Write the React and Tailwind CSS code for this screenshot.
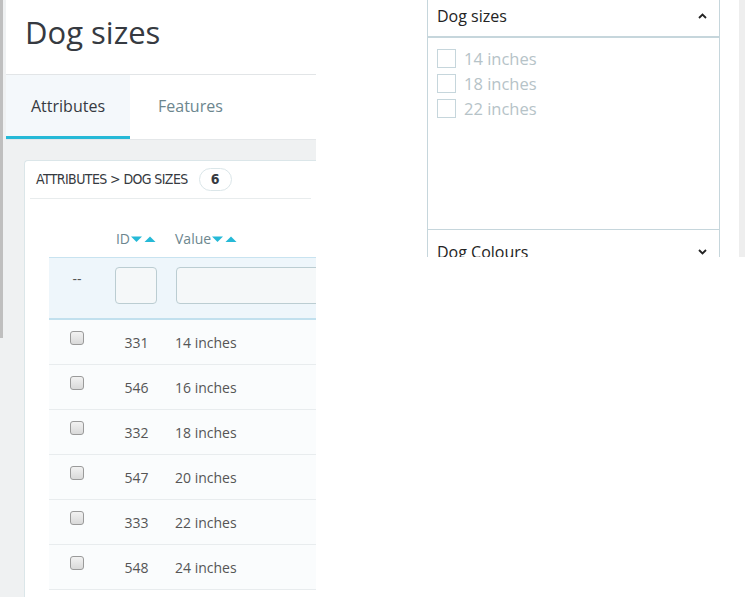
import React from "react";

const OPEN = { fontFamily: '"Open Sans", "Noto Sans", sans-serif' };
const COND = { fontFamily: '"DejaVu Sans Condensed", "Liberation Sans", sans-serif' };

function SortArrows() {
  return (
    <svg width="25" height="8" viewBox="0 0 25 8" className="ml-[1px] shrink-0">
      <path d="M0 1.5 L11 1.5 L5.5 7 Z" fill="#25b9d7" />
      <path d="M13.5 7 L24.5 7 L19 1.5 Z" fill="#25b9d7" />
    </svg>
  );
}

function Check() {
  return (
    <span className="inline-block w-[14px] h-[14px] rounded-[3px] border border-[#9a9a9a] bg-gradient-to-b from-[#f2f2f2] to-[#d9d9d9]" />
  );
}

const rows = [
  ["331", "14 inches"],
  ["546", "16 inches"],
  ["332", "18 inches"],
  ["547", "20 inches"],
  ["333", "22 inches"],
  ["548", "24 inches"],
];

function LeftPanel() {
  return (
    <div className="w-[316px] h-[597px] shrink-0 flex bg-[#eff1f2] overflow-hidden" style={OPEN}>
      <div className="w-[3px] shrink-0">
        <div className="h-[338px] bg-[#bfbfbf]" />
      </div>
      <div className="flex-1 min-w-0 pl-[3px] flex flex-col">
        <div className="h-[75px] bg-white border-b border-[#e2e5e7] flex items-center pl-[19px] shrink-0">
          <span className="text-[31px] text-[#363a41] leading-none -mt-[10px]">Dog sizes</span>
        </div>
        <div className="h-[65px] bg-white flex shrink-0 border-b border-[#e4e7e9]">
          <div className="w-[124px] bg-[#f4f8fb] border-b-[3px] border-[#25b9d7] flex items-center justify-center text-[16px] text-[#363a41] pt-[1px]">
            Attributes
          </div>
          <div className="flex items-center pl-[28px] text-[16px] text-[#6c868e] pb-[3px] pt-[1px]">Features</div>
        </div>
        <div className="pt-[20px] pl-[18px]">
          <div className="bg-white border border-[#dbe6e9] border-r-0 rounded-tl-[4px] h-[460px] overflow-hidden">
            <div className="px-[5px]">
              <div className="h-[38px] border-b border-[#e8eced] flex items-center pl-[6px] gap-[11px]">
                <span className="text-[14px] text-[#363a41] tracking-[-0.6px] uppercase" style={COND}>
                  Attributes &gt; Dog sizes
                </span>
                <span className="h-[23px] w-[33px] rounded-full border border-[#dbe6e9] flex items-center justify-center text-[14px] font-bold text-[#363a41]" style={COND}>
                  6
                </span>
              </div>
            </div>
            <div className="pl-[24px] pt-[21px] w-[420px]">
              <div className="flex h-[37px] items-center text-[14px] text-[#6c868e]">
                <div className="w-[56px] shrink-0" />
                <div className="w-[62px] shrink-0 flex justify-center items-center">
                  ID<SortArrows />
                </div>
                <div className="flex items-center pl-[8px]">
                  Value<SortArrows />
                </div>
              </div>
              <div className="flex h-[63px] bg-[#eef6fb] border-t border-[#c8e3f0] border-b-2 border-b-[#c1e0ee] pt-[9px]">
                <div className="w-[56px] shrink-0 flex justify-center text-[14px] text-[#555] leading-[20px] pt-[2px]">--</div>
                <div className="w-[62px] shrink-0 flex justify-center">
                  <div className="w-[42px] h-[37px] rounded-[4px] border border-[#bbcdd2] bg-[#f5f8f9]" />
                </div>
                <div className="pl-[9px] shrink-0">
                  <div className="w-[220px] h-[37px] rounded-[4px] border border-[#bbcdd2] bg-[#f5f8f9]" />
                </div>
              </div>
              {rows.map(([id, v]) => (
                <div key={id} className="flex h-[45px] bg-[#fafcfd] border-b border-[#e8ecee] text-[14px] text-[#555]">
                  <div className="w-[56px] shrink-0 flex justify-center pt-[11px]">
                    <Check />
                  </div>
                  <div className="w-[62px] shrink-0 flex justify-center items-center pl-[1px]">{id}</div>
                  <div className="flex items-center pl-[8px]">{v}</div>
                </div>
              ))}
            </div>
          </div>
        </div>
      </div>
    </div>
  );
}

function Chevron({ up }) {
  return (
    <svg width="9" height="6" viewBox="0 0 9 6">
      <path
        d={up ? "M1 5 L4.5 1.5 L8 5" : "M1 1 L4.5 4.5 L8 1"}
        fill="none"
        stroke="#232323"
        strokeWidth="1.8"
      />
    </svg>
  );
}

function RightPanel() {
  const items = ["14 inches", "18 inches", "22 inches"];
  return (
    <div className="w-[293px] h-[257px] shrink-0 border-x border-[#c6d6dc] flex flex-col overflow-hidden" style={OPEN}>
      <div className="h-[38px] border-b-2 border-[#c6d6dc] flex items-center justify-between pl-[9px] pr-[12px] shrink-0 pb-[5px]">
        <span className="text-[16px] text-[#232323] font-medium">Dog sizes</span>
        <Chevron up />
      </div>
      <div className="h-[192px] border-b border-[#c6d6dc] pt-[9px] pl-[9px] shrink-0 flex flex-col">
        {items.map((t) => (
          <div key={t} className="flex items-center h-[25px] gap-[8px]">
            <span className="w-[19px] h-[19px] border border-[#c6d6dc] -mt-[2px]" />
            <span className="text-[16.5px] text-[#b6c3c8]">{t}</span>
          </div>
        ))}
      </div>
      <div className="flex items-center justify-between pl-[9px] pr-[12px] pt-[10px]">
        <span className="text-[16px] text-[#232323] font-medium">Dog Colours</span>
        <Chevron />
      </div>
    </div>
  );
}

export default function App() {
  return (
    <div className="w-[745px] h-[597px] bg-white flex overflow-hidden">
      <LeftPanel />
      <div className="w-[111px] shrink-0" />
      <RightPanel />
      <div className="w-[19px] shrink-0" />
      <div className="w-[6px] h-[257px] bg-[#eeeeee] shrink-0" />
    </div>
  );
}
